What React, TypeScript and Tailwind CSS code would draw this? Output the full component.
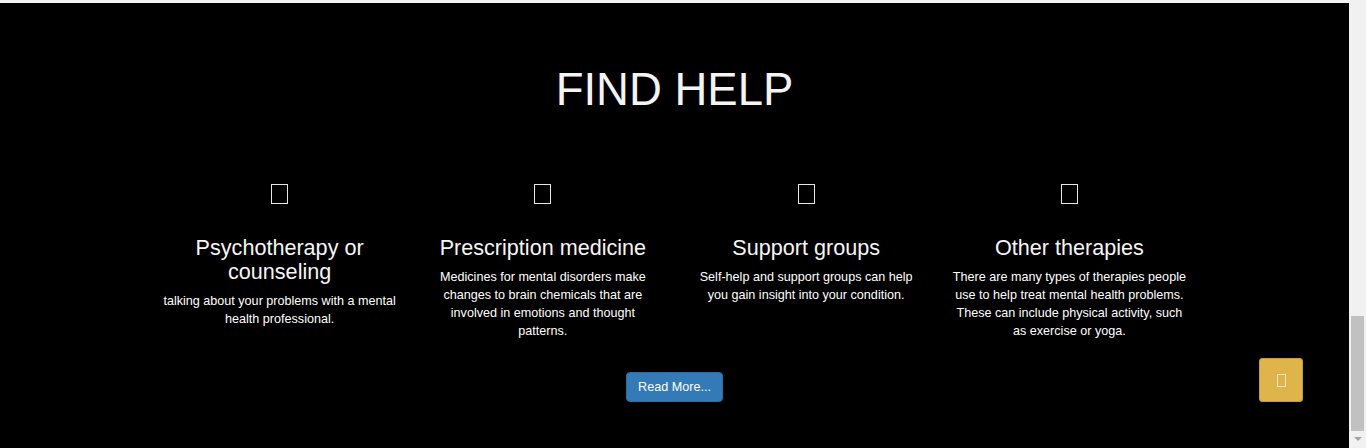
import React from "react";

const items = [
  {
    title: "Psychotherapy or counseling",
    body: "talking about your problems with a mental health professional.",
  },
  {
    title: "Prescription medicine",
    body: "Medicines for mental disorders make changes to brain chemicals that are involved in emotions and thought patterns.",
  },
  {
    title: "Support groups",
    body: "Self-help and support groups can help you gain insight into your condition.",
  },
  {
    title: "Other therapies",
    body: "There are many types of therapies people use to help treat mental health problems. These can include physical activity, such as exercise or yoga.",
  },
];

export default function App() {
  return (
    <div
      className="flex h-[448px] w-[1366px] overflow-hidden"
      style={{ fontFamily: '"Liberation Sans", Arial, sans-serif' }}
    >
      <div className="relative flex h-full w-[1349px] flex-col">
        <div className="h-[3px] bg-[#f3f3f3]" />
        <section className="flex-1 bg-black pt-[62px] text-white">
          <h1 className="text-center text-[45.5px] leading-[50px] font-normal text-[#f4f4f4]">
            FIND HELP
          </h1>
          <div className="mx-auto mt-[69px] grid w-[1053px] grid-cols-4">
            {items.map((it) => (
              <div key={it.title} className="flex flex-col items-center">
                <div className="h-[20px] w-[17px] border border-[#e6e6e6]" />
                <div className="mt-[32px] w-[236px] text-center">
                  <h3 className="text-[21.6px] leading-[24px] font-normal text-[#f5f5f5]">
                    {it.title}
                  </h3>
                  <p className="mt-[7.5px] text-[12.6px] leading-[18px] text-white">
                    {it.body}
                  </p>
                </div>
              </div>
            ))}
          </div>
          <div className="mt-[32px] flex justify-center">
            <button className="h-[30px] w-[97px] rounded-[4px] border border-[#2e6da4] bg-[#337ab7] text-[12.6px] leading-[18px] text-white">
              Read More...
            </button>
          </div>
        </section>
        <div className="absolute right-[46px] bottom-[46px] flex h-[44px] w-[44px] items-center justify-center rounded-[3px] border border-[#c49d3c] bg-[#dfb44b]">
          <div className="h-[13px] w-[9px] border border-[#f8ebc2]" />
        </div>
      </div>
      <div className="relative h-full w-[17px] bg-[#f1f1f1]">
        <div className="absolute top-[316px] left-[2px] h-[115px] w-[13px] bg-[#c1c1c1]" />
        <div className="absolute top-[437px] left-[5px] h-0 w-0 border-t-[4px] border-r-[4px] border-l-[4px] border-t-[#a3a3a3] border-r-transparent border-l-transparent" />
      </div>
    </div>
  );
}
